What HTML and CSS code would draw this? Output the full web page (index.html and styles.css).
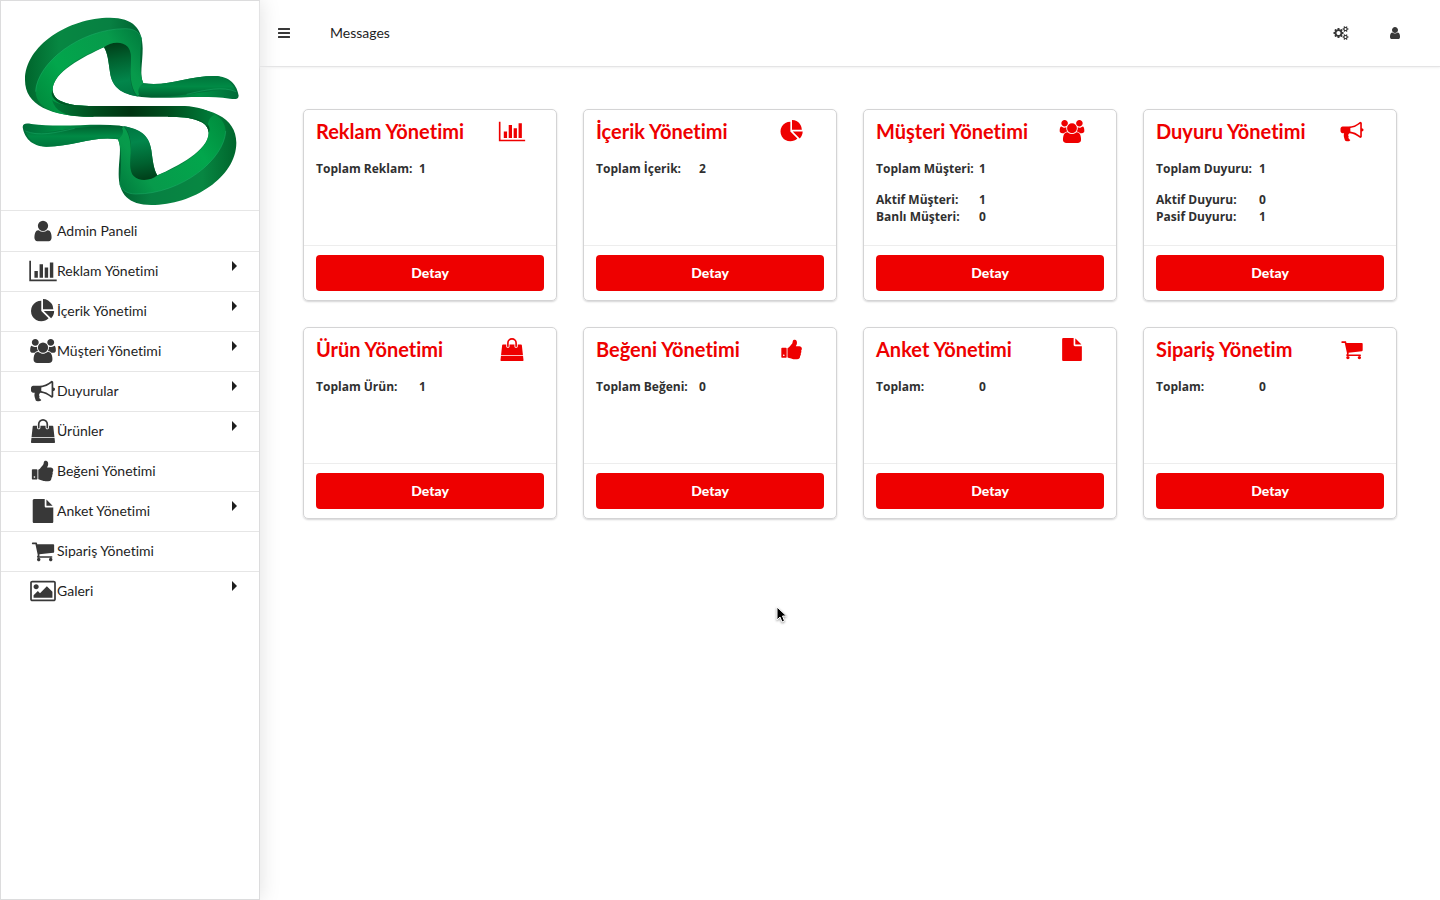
FILE: index.html
```html
<!DOCTYPE html>
<html lang="tr">
<head>
<meta charset="utf-8">
<title>Admin Paneli</title>
<link rel="stylesheet" href="styles.css">
</head>
<body>
<svg class="sprite" aria-hidden="true">
  <symbol id="user" viewBox="0 0 1792 1792"><path d="M1536 1399q0 109-62.5 187t-150.5 78h-854q-88 0-150.5-78t-62.5-187q0-85 8.5-160.5t31.5-152 58.5-131 94-89 134.5-34.5q131 128 313 128t313-128q76 0 134.5 34.5t94 89 58.5 131 31.5 152 8.5 160.5zm-256-887q0 159-112.5 271.5t-271.5 112.5-271.5-112.5-112.5-271.5 112.5-271.5 271.5-112.5 271.5 112.5 112.5 271.5z"/></symbol>
  <symbol id="chart" viewBox="0 0 2048 1792"><path d="M640 896v512h-256v-512h256zm384-512v1024h-256v-1024h256zm1024 1152v128h-2048v-1536h128v1408h1920zm-640-896v768h-256v-768h256zm384-384v1152h-256v-1152h256z"/></symbol>
  <symbol id="pie" viewBox="0 0 1792 1792"><path d="M768 890l546 546q-106 108-247.5 168t-298.5 60q-209 0-385.5-103t-279.5-279.5-103-385.5 103-385.5 279.5-279.5 385.5-103v762zm187 6h773q0 157-60 298.5t-168 247.5zm709-128h-768v-768q209 0 385.5 103t279.5 279.5 103 385.5z"/></symbol>
  <symbol id="users" viewBox="0 0 1920 1792"><path d="M593 896q-162 5-265 128h-134q-82 0-138-40.5t-56-118.5q0-353 124-353 6 0 43.5 21t97.5 42.5 119 21.5q67 0 133-23-5 37-5 66 0 139 81 256zm1071 637q0 120-73 189.5t-194 69.5h-874q-121 0-194-69.5t-73-189.5q0-53 3.5-103.5t14-109 26.5-108.5 43-97.5 62-81 85.5-53.5 111.5-20q10 0 43 21.5t73 48 107 48 135 21.5 135-21.5 107-48 73-48 43-21.5q61 0 111.5 20t85.5 53.5 62 81 43 97.5 26.5 108.5 14 109 3.5 103.5zm-1024-1277q0 106-75 181t-181 75-181-75-75-181 75-181 181-75 181 75 75 181zm704 384q0 159-112.5 271.5t-271.5 112.5-271.5-112.5-112.5-271.5 112.5-271.5 271.5-112.5 271.5 112.5 112.5 271.5zm576 225q0 78-56 118.5t-138 40.5h-134q-103-123-265-128 81-117 81-256 0-29-5-66 66 23 133 23 59 0 119-21.5t97.5-42.5 43.5-21q124 0 124 353zm-128-609q0 106-75 181t-181 75-181-75-75-181 75-181 181-75 181 75 75 181z"/></symbol>
  <symbol id="horn" viewBox="0 0 1792 1792"><path d="M1664 640q53 0 90.5 37.5t37.5 90.5-37.5 90.5-90.5 37.5v384q0 52-38 90t-90 38q-417-347-812-380-58 19-91 66t-31 100.5 40 92.5q-20 33-23 65.5t6 58 33.5 55 48 50 61.5 50.5q-29 58-111.5 83t-168.5 11.5-132-55.5q-7-23-29.5-87.5t-32-94.5-23-89-15-101 3.5-98.5 22-110.5h-122q-66 0-113-47t-47-113v-192q0-66 47-113t113-47h480q435 0 896-384 52 0 90 38t38 90v384zm-128 604v-954q-394 302-768 343v270q377 42 768 341z"/></symbol>
  <symbol id="bag" viewBox="0 0 1792 1792"><path d="M1757 1408l35 313q3 28-16 50-19 21-48 21h-1664q-29 0-48-21-19-22-16-50l35-313h1722zm-93-839l86 775h-1708l86-775q3-24 21-40.5t43-16.5h256v128q0 53 37.5 90.5t90.5 37.5 90.5-37.5 37.5-90.5v-128h384v128q0 53 37.5 90.5t90.5 37.5 90.5-37.5 37.5-90.5v-128h256q25 0 43 16.5t21 40.5zm-384-185v256q0 26-19 45t-45 19-45-19-19-45v-256q0-106-75-181t-181-75-181 75-75 181v256q0 26-19 45t-45 19-45-19-19-45v-256q0-159 112.5-271.5t271.5-112.5 271.5 112.5 112.5 271.5z"/></symbol>
  <symbol id="thumb" viewBox="0 0 1792 1792"><path d="M320 1344q0-26-19-45t-45-19q-27 0-45.5 19t-18.5 45q0 27 18.5 45.5t45.5 18.5q26 0 45-18.5t19-45.5zm160-512v640q0 26-19 45t-45 19h-288q-26 0-45-19t-19-45v-640q0-26 19-45t45-19h288q26 0 45 19t19 45zm1184 0q0 86-55 149 15 44 15 76 3 76-43 137 17 56 0 117-15 57-54 94 9 112-49 181-64 76-197 78h-129q-66 0-144-15.5t-121.5-29-120.5-39.5q-123-43-158-44-26-1-45-19.5t-19-44.5v-641q0-25 18-43.5t43-20.5q24-2 76-59t101-121q68-87 101-120 18-18 31-48t17.5-48.5 13.5-60.5q7-39 12.5-61t19.5-52 34-50q19-19 45-19 46 0 82.5 10.5t60 26 40 40.5 24 45 12 50 5 45 .5 39q0 38-9.5 76t-19 60-27.5 56q-3 6-10 18t-11 22-8 24h277q78 0 135 57t57 135z"/></symbol>
  <symbol id="file" viewBox="0 0 1792 1792"><path d="M1152 512v-472q22 14 36 28l408 408q14 14 28 36h-472zm-128 32q0 40 28 68t68 28h544v1056q0 40-28 68t-68 28h-1344q-40 0-68-28t-28-68v-1600q0-40 28-68t68-28h800v544z"/></symbol>
  <symbol id="cart" viewBox="0 0 1792 1792"><path d="M704 1536q0 52-38 90t-90 38-90-38-38-90 38-90 90-38 90 38 38 90zm896 0q0 52-38 90t-90 38-90-38-38-90 38-90 90-38 90 38 38 90zm128-1088v512q0 24-16.5 42.5t-40.5 21.5l-1044 122q13 60 13 70 0 16-24 64h920q26 0 45 19t19 45-19 45-45 19h-1024q-26 0-45-19t-19-45q0-11 8-31.5t16-36 21.5-40 15.5-29.5l-177-823h-204q-26 0-45-19t-19-45 19-45 45-19h256q16 0 28.5 6.5t19.5 15.5 13 24.5 8 26 5.5 29.5 4.5 26h1201q26 0 45 19t19 45z"/></symbol>
  <symbol id="picture" viewBox="0 0 1920 1792"><path d="M640 576q0 80-56 136t-136 56-136-56-56-136 56-136 136-56 136 56 56 136zm1024 384v448h-1408v-192l320-320 160 160 512-512zm96-704h-1600q-13 0-22.5 9.5t-9.5 22.5v1216q0 13 9.5 22.5t22.5 9.5h1600q13 0 22.5-9.5t9.5-22.5v-1216q0-13-9.5-22.5t-22.5-9.5zm160 32v1216q0 66-47 113t-113 47h-1600q-66 0-113-47t-47-113v-1216q0-66 47-113t113-47h1600q66 0 113 47t47 113z"/></symbol>
  <symbol id="bars" viewBox="0 0 1792 1792"><path d="M192 1280h1408q64 0 64 64v128q0 64-64 64h-1408q-64 0-64-64v-128q0-64 64-64zM192 768h1408q64 0 64 64v128q0 64-64 64h-1408q-64 0-64-64v-128q0-64 64-64zM192 256h1408q64 0 64 64v128q0 64-64 64h-1408q-64 0-64-64v-128q0-64 64-64z"/></symbol>
  <symbol id="cogs" viewBox="0 0 1920 1792">
    <path d="M896 896q0-106-75-181t-181-75-181 75-75 181 75 181 181 75 181-75 75-181zM1280 805v185q0 10-7 19.5t-16 10.5l-155 24q-11 35-32 76 34 48 90 115 7 11 7 20 0 12-7 19-23 30-82.500 89.500t-78.500 59.500q-11 0-21-7l-115-90q-37 19-77 31-11 108-23 155-7 24-30 24h-186q-11 0-20-7.500t-10-17.500l-23-153q-34-10-75-31l-118 89q-7 7-20 7-11 0-21-8-144-133-144-160 0-9 7-19 10-14 41-53t47-61q-23-44-35-82l-152-24q-10-1-17-9.500t-7-19.500v-185q0-10 7-19.500t16-10.500l155-24q11-35 32-76-34-48-90-115-7-11-7-20 0-12 7-20 22-30 82-89t79-59q11 0 21 7l115 90q34-18 77-32 11-108 23-154 7-24 30-24h186q11 0 20 7.500t10 17.500l23 153q34 10 75 31l118-89q8-7 20-7 11 0 21 8 144 133 144 160 0 8-7 19-12 16-42 54t-45 60q23 48 34 82l152 23q10 2 17 10.500t7 19.500z"/>
    <path id="cog" d="M1664 1408q0-52-38-90t-90-38-90 38-38 90q0 53 37.500 90.500t90.500 37.500 90.500-37.500 37.500-90.500zM1920 1338v140q0 16-149 31-12 27-30 52 51 113 51 138 0 4-4 7-122 71-124 71-8 0-46-47t-52-68q-20 2-30 2t-30-2q-14 21-52 68t-46 47q-2 0-124-71-4-3-4-7 0-25 51-138-18-25-30-52-149-15-149-31v-140q0-16 149-31 13-29 30-52-51-113-51-138 0-4 4-7 4-2 35-20t59-34 30-16q8 0 46 46.500t52 67.500q20-2 30-2t30 2q51-71 92-112l6-2q4 0 124 70 4 3 4 7 0 25-51 138 17 23 30 52 149 15 149 31z"/>
    <use href="#cog" transform="translate(0 -1024)"/>
  </symbol>
  <symbol id="caret" viewBox="0 0 5 10"><path d="M0 0l5 5-5 5z"/></symbol>
</svg>

<div class="app">
  <aside class="sidebar">
    <a class="brand" href="#" aria-label="Ana sayfa">
      <svg class="logo" viewBox="0 0 774 627" aria-hidden="true">
        <defs>
          <linearGradient id="tube" gradientUnits="userSpaceOnUse" x1="75" y1="0" x2="715" y2="0">
            <stop offset="0" stop-color="#00652c"/><stop offset=".16" stop-color="#078742"/><stop offset=".4" stop-color="#078042"/><stop offset=".54" stop-color="#006331"/><stop offset=".64" stop-color="#006b35"/><stop offset=".82" stop-color="#009045"/><stop offset="1" stop-color="#006b38"/>
          </linearGradient>
          <linearGradient id="face" gradientUnits="userSpaceOnUse" x1="110" y1="310" x2="430" y2="90">
            <stop offset="0" stop-color="#008b3d"/><stop offset=".3" stop-color="#02a64c"/><stop offset=".75" stop-color="#079a4b"/><stop offset="1" stop-color="#00783c"/>
          </linearGradient>
          <linearGradient id="fold" gradientUnits="userSpaceOnUse" x1="345" y1="120" x2="375" y2="285">
            <stop offset="0" stop-color="#003915"/><stop offset=".35" stop-color="#00612f"/><stop offset=".75" stop-color="#02864b"/><stop offset="1" stop-color="#007942"/>
          </linearGradient>
          <linearGradient id="bar" gradientUnits="userSpaceOnUse" x1="150" y1="0" x2="634" y2="0">
            <stop offset="0" stop-color="#007a38"/><stop offset=".28" stop-color="#004c1d"/><stop offset=".5" stop-color="#003311"/><stop offset=".72" stop-color="#004c1d"/><stop offset="1" stop-color="#007a38"/>
          </linearGradient>
          <linearGradient id="tail" x1="0" y1="0" x2="0" y2="1">
            <stop offset="0" stop-color="#00743b"/><stop offset=".5" stop-color="#008a45"/><stop offset="1" stop-color="#00612f"/>
          </linearGradient>
          <g id="half">
            <path fill="url(#tube)" d="M280 350C150 350 75 315 75 240C75 137 205 53 330 53C399 53 428 86 428 145C428 190 418 225 430 250C505 261 560 228 645 228C690 228 712 257 716 287C715 299 704 298 690 296C600 284 505 299 425 291C370 284 336 264 330 217C325 181 323 160 312 142C251 170 158 217 158 270C159 305 205 318 280 318Z"/>
            <path fill="url(#face)" d="M280 350C170 350 108 325 107 275C110 190 240 86 376 86C405 86 419 99 425 115C420 160 417 220 430 250C425 275 423 282 412 288C389 260 390 215 393 180C395 145 370 125 337 133C250 160 158 217 158 270C159 305 205 318 280 318Z"/>
            <path fill="url(#fold)" d="M312 142C330 126 366 122 383 140C405 165 381 216 397 264C401 277 407 286 415 290C365 282 336 264 330 217C325 181 323 160 312 142Z"/>
            <path fill="url(#tail)" d="M430 250C505 261 560 228 645 228C676 230 699 250 707 273C655 260 570 293 425 291C410 281 412 262 430 250Z"/>
            <path fill="none" stroke="#24b573" stroke-width="2" opacity=".6" d="M107 275C110 190 240 86 376 86C405 86 419 99 425 115M560 283C620 269 667 258 708 275"/>
            <path fill="#00411c" opacity=".75" d="M158 270C159 305 205 318 280 318L280 328C205 327 157 309 155 280Z"/>
          </g>
        </defs>
        <g transform="translate(-3 -3)">
          <use href="#half"/>
          <use href="#half" transform="rotate(180 392 334)"/>
          <path fill="url(#bar)" d="M230 317C300 320 480 317 554 318C590 320 625 329 643 345C628 349 624 370 622 378C603 354 570 350 520 350H250C195 349 165 333 156 300C173 313 199 317 230 317Z"/>
        </g>
      </svg>
    </a>
    <nav>
      <ul class="menu">
        <li><a href="#"><svg class="icon"><use href="#user"/></svg>Admin Paneli</a></li>
        <li><a href="#"><svg class="icon"><use href="#chart"/></svg>Reklam Yönetimi<svg class="caret"><use href="#caret"/></svg></a></li>
        <li><a href="#"><svg class="icon"><use href="#pie"/></svg>İçerik Yönetimi<svg class="caret"><use href="#caret"/></svg></a></li>
        <li><a href="#"><svg class="icon"><use href="#users"/></svg>Müşteri Yönetimi<svg class="caret"><use href="#caret"/></svg></a></li>
        <li><a href="#"><svg class="icon"><use href="#horn"/></svg>Duyurular<svg class="caret"><use href="#caret"/></svg></a></li>
        <li><a href="#"><svg class="icon"><use href="#bag"/></svg>Ürünler<svg class="caret"><use href="#caret"/></svg></a></li>
        <li><a href="#"><svg class="icon"><use href="#thumb"/></svg>Beğeni Yönetimi</a></li>
        <li><a href="#"><svg class="icon"><use href="#file"/></svg>Anket Yönetimi<svg class="caret"><use href="#caret"/></svg></a></li>
        <li><a href="#"><svg class="icon"><use href="#cart"/></svg>Sipariş Yönetimi</a></li>
        <li><a href="#"><svg class="icon"><use href="#picture"/></svg>Galeri<svg class="caret"><use href="#caret"/></svg></a></li>
      </ul>
    </nav>
  </aside>

  <div class="page">
    <header class="topbar">
      <button class="tool" type="button" aria-label="Menü"><svg><use href="#bars"/></svg></button>
      <a class="messages" href="#">Messages</a>
      <div class="actions">
        <button class="tool" type="button" aria-label="Ayarlar"><svg><use href="#cogs"/></svg></button>
        <button class="tool" type="button" aria-label="Hesap"><svg><use href="#user"/></svg></button>
      </div>
    </header>
    <main class="cards">
      <section class="card">
        <div class="body"><div class="head"><h2>Reklam Yönetimi</h2><svg class="icon"><use href="#chart"/></svg></div>
          <dl class="stats"><dt>Toplam Reklam:</dt><dd>1</dd></dl></div>
        <div class="foot"><button type="button">Detay</button></div>
      </section>
      <section class="card">
        <div class="body"><div class="head"><h2>İçerik Yönetimi</h2><svg class="icon"><use href="#pie"/></svg></div>
          <dl class="stats"><dt>Toplam İçerik:</dt><dd>2</dd></dl></div>
        <div class="foot"><button type="button">Detay</button></div>
      </section>
      <section class="card">
        <div class="body"><div class="head"><h2>Müşteri Yönetimi</h2><svg class="icon"><use href="#users"/></svg></div>
          <dl class="stats"><dt>Toplam Müşteri:</dt><dd>1</dd></dl>
          <dl class="stats"><dt>Aktif Müşteri:</dt><dd>1</dd><dt>Banlı Müşteri:</dt><dd>0</dd></dl></div>
        <div class="foot"><button type="button">Detay</button></div>
      </section>
      <section class="card">
        <div class="body"><div class="head"><h2>Duyuru Yönetimi</h2><svg class="icon"><use href="#horn"/></svg></div>
          <dl class="stats"><dt>Toplam Duyuru:</dt><dd>1</dd></dl>
          <dl class="stats"><dt>Aktif Duyuru:</dt><dd>0</dd><dt>Pasif Duyuru:</dt><dd>1</dd></dl></div>
        <div class="foot"><button type="button">Detay</button></div>
      </section>
      <section class="card">
        <div class="body"><div class="head"><h2>Ürün Yönetimi</h2><svg class="icon"><use href="#bag"/></svg></div>
          <dl class="stats"><dt>Toplam Ürün:</dt><dd>1</dd></dl></div>
        <div class="foot"><button type="button">Detay</button></div>
      </section>
      <section class="card">
        <div class="body"><div class="head"><h2>Beğeni Yönetimi</h2><svg class="icon"><use href="#thumb"/></svg></div>
          <dl class="stats"><dt>Toplam Beğeni:</dt><dd>0</dd></dl></div>
        <div class="foot"><button type="button">Detay</button></div>
      </section>
      <section class="card">
        <div class="body"><div class="head"><h2>Anket Yönetimi</h2><svg class="icon"><use href="#file"/></svg></div>
          <dl class="stats"><dt>Toplam:</dt><dd>0</dd></dl></div>
        <div class="foot"><button type="button">Detay</button></div>
      </section>
      <section class="card">
        <div class="body"><div class="head"><h2>Sipariş Yönetim</h2><svg class="icon"><use href="#cart"/></svg></div>
          <dl class="stats"><dt>Toplam:</dt><dd>0</dd></dl></div>
        <div class="foot"><button type="button">Detay</button></div>
      </section>
    </main>
  </div>
</div>
<svg class="pointer" viewBox="0 0 12 18" aria-hidden="true"><path d="M1 1v13l3-3 2 5 2.500-1-2-5h4z"/></svg>
</body>
</html>
```

FILE: styles.css
```css
* { box-sizing: border-box; }
body { margin: 0; font: 14px/20px Lato, "Noto Sans", sans-serif; font-variant-ligatures: none; color: #1e1e1e; background: #fff; }
a { color: inherit; text-decoration: none; }
button { font: inherit; font-variant-ligatures: none; border: 0; padding: 0; cursor: pointer; }
.sprite { position: absolute; width: 0; height: 0; }
.app { display: flex; min-height: 100vh; }

.sidebar { flex: none; width: 260px; border: 1px solid #dcdcdd; background: #fff; box-shadow: 0 0 20px #dfdfdf; }
.brand { display: block; height: 210px; border-bottom: 1px solid #e6e6e6; }
.logo { display: block; width: 100%; height: 209px; }
.menu { list-style: none; margin: 0; padding: 0; }
.menu li + li { border-top: 1px solid #e6e6e6; }
.menu li { height: 40px; }
.menu a { display: flex; align-items: center; height: 100%; padding: 0 22px 0 28px; }
.menu li + li a { padding-bottom: 1px; }
.menu .icon { flex: none; width: 28px; height: 24px; fill: #383838; }
.caret { width: 5px; height: 10px; margin: 0 0 10px auto; fill: #1e1e1e; }

.page { flex: 1; min-width: 0; }
.topbar { display: flex; align-items: center; height: 67px; padding: 0 37px 0 16px; border-bottom: 1px solid #e4e4e5; box-shadow: 0 1px 2px #f1f1f1; }
.tool { display: flex; justify-content: center; width: 16px; background: none; }
.tool svg { width: 16px; height: 14px; fill: #383838; }
.messages { margin-left: 38px; }
.actions { display: flex; gap: 38px; margin-left: auto; }

.cards { display: grid; grid-template-columns: repeat(4, minmax(0, 1fr)); gap: 26px; padding: 42px 43px; }
.card { display: flex; flex-direction: column; min-height: 192px; border: 1px solid #d4d4d5; border-radius: 5px; box-shadow: 0 1px 2px #d4d4d5; }
.body { flex: 1; padding: 8px 12px; }
.head { display: flex; align-items: center; justify-content: space-between; padding-right: 18px; }
.head h2 { margin: 0; font-size: 20px; line-height: 26px; color: #ee0000; }
.head .icon { flex: none; width: 28px; height: 23px; fill: #ee0000; }
.stats { display: grid; grid-template-columns: 103px 1fr; margin: 16px 0 0; font: bold 12px/17px "Open Sans", "Noto Sans", sans-serif; color: #303030; }
.stats dt { white-space: nowrap; }
.stats dd { margin: 0; }
.stats + .stats { margin-top: 14px; }
.foot { padding: 9px 12px; border-top: 1px solid #ededed; }
.foot button { display: block; width: 100%; height: 36px; border-radius: 4px; background: #ee0000; color: #fff; font-weight: 900; }

.pointer { position: absolute; left: 776px; top: 606px; width: 12px; height: 18px; fill: #000; stroke: #fff; filter: drop-shadow(0 1px 1px #999); }
```
